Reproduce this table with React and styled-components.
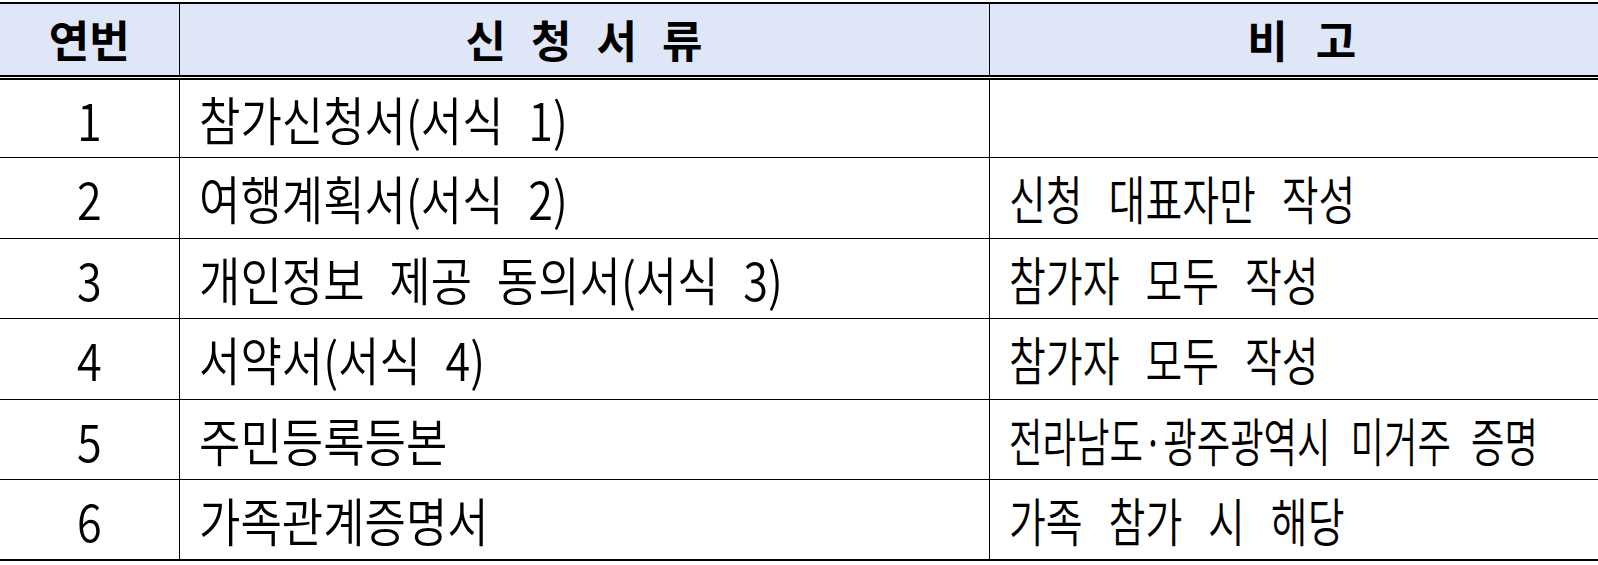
import styled, { createGlobalStyle } from "styled-components"

const GlobalStyle = createGlobalStyle`
  html, body {
    margin: 0;
    padding: 0;
    background: #fff;
  }
  body {
    font-family: "Noto Sans CJK KR", "Noto Sans", sans-serif;
    color: #000;
  }
`

const Page = styled.div`
  width: 1598px;
  padding-top: 2px;
  overflow: hidden;
`

const Table = styled.table`
  width: 1598px;
  border-collapse: collapse;
  table-layout: fixed;
  border-top: 2px solid #000;
  border-bottom: 2px solid #000;
`

const HeadRow = styled.tr`
  height: 74px;
  background: #dfe6f7;
  border-bottom: 5px double #000;
`

const Row = styled.tr`
  height: 80.5px;
  border-bottom: 1.5px solid #000;

  &:last-child {
    border-bottom: none;
  }
`

const Th = styled.th`
  padding: 0 0 0 ${props => props.$shift || 0}px;
  font-size: 44px;
  font-weight: 700;
  line-height: 1.2;
  text-align: center;
  word-spacing: ${props => props.$spread || 0}px;
  border-left: ${props => (props.$first ? "none" : "1.5px solid #000")};
`

const Td = styled.td`
  padding: 1px 0 0 ${props => (props.$center ? 0 : 19)}px;
  text-align: ${props => (props.$center ? "center" : "left")};
  white-space: nowrap;
  overflow: hidden;
  border-left: ${props => (props.$first ? "none" : "1.5px solid #000")};
`

// 장평: the source font is set narrower than it is tall
const Text = styled.span`
  display: inline-block;
  font-size: 52px;
  font-weight: 350;
  line-height: 1.2;
  word-spacing: ${props => props.$gap ?? 17}px;
  transform: scaleX(${props => props.$scale || 0.865});
  transform-origin: ${props => (props.$center ? "center" : "left")} center;
`

const rows = [
  { no: "1", doc: "참가신청서(서식 1)", note: "" },
  { no: "2", doc: "여행계획서(서식 2)", note: "신청 대표자만 작성" },
  { no: "3", doc: "개인정보 제공 동의서(서식 3)", note: "참가자 모두 작성" },
  { no: "4", doc: "서약서(서식 4)", note: "참가자 모두 작성" },
  { no: "5", doc: "주민등록등본", note: "전라남도·광주광역시 미거주 증명", tight: true },
  { no: "6", doc: "가족관계증명서", note: "가족 참가 시 해당" },
]

export default function App() {
  return (
    <Page>
      <GlobalStyle />
      <Table>
        <colgroup>
          <col style={{ width: 179 }} />
          <col style={{ width: 810 }} />
          <col style={{ width: 609 }} />
        </colgroup>
        <thead>
          <HeadRow>
            <Th $first>연번</Th>
            <Th $spread={15}>신 청 서 류</Th>
            <Th $spread={18} $shift={16}>비 고</Th>
          </HeadRow>
        </thead>
        <tbody>
          {rows.map(row => (
            <Row key={row.no}>
              <Td $first $center>
                <Text $center>{row.no}</Text>
              </Td>
              <Td>
                <Text>{row.doc}</Text>
              </Td>
              <Td>
                {row.tight ? (
                  <Text $scale={0.7} $gap={17}>{row.note}</Text>
                ) : (
                  <Text $scale={0.77} $gap={22}>{row.note}</Text>
                )}
              </Td>
            </Row>
          ))}
        </tbody>
      </Table>
    </Page>
  )
}
